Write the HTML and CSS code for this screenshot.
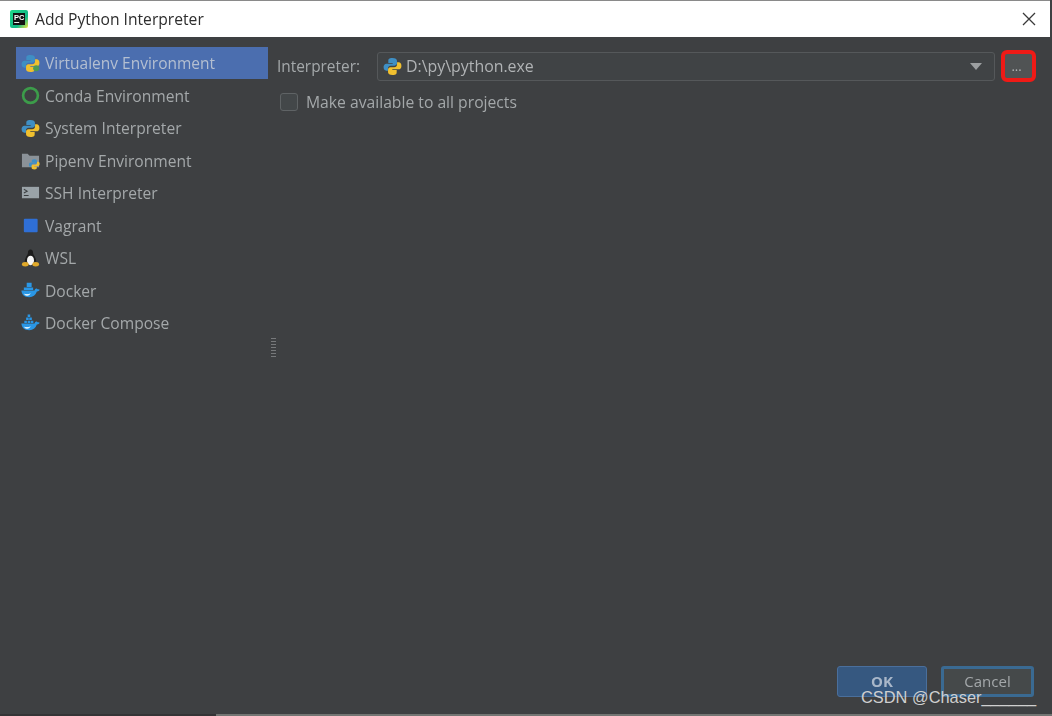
FILE: index.html
```html
<!DOCTYPE html>
<html lang="en">
<head>
<meta charset="utf-8">
<title>Add Python Interpreter</title>
<link rel="stylesheet" href="styles.css">
</head>
<body>
<svg class="defs" width="0" height="0" aria-hidden="true">
  <defs>
    <g id="py">
      <path fill="#3f8fc4" d="M9.900 1C6 1 5.600 2.600 5.600 4v2.200h4.600V7H3.600C1.900 7 .6 8.300.6 10.600c0 2.400 1.200 3.800 2.900 3.800h1.700v-2.300c0-1.600 1.300-3 3-3h4.100c1.300 0 2.400-1.100 2.400-2.400V4c0-1.600-1.500-3-4.800-3z"/>
      <path fill="#f0c02f" d="M10.100 19c3.900 0 4.300-1.600 4.300-3v-2.200H9.800V13h6.600c1.700 0 3-1.300 3-3.600 0-2.400-1.200-3.800-2.900-3.800h-1.700v2.300c0 1.600-1.300 3-3 3H7.700c-1.300 0-2.400 1.100-2.400 2.400V16c0 1.600 1.500 3 4.800 3z"/>
    </g>
    <g id="whale">
      <path fill="#2a97e6" d="M.4 10h13.900c.2-1.500 1.300-2.400 2.300-2l.9.800c.8-.3 1.600-.2 2.200.4-.6 1.300-1.700 1.900-3 1.800-1.400 3.800-4.100 6-7.900 6C3.600 17 .8 14.500.4 10z"/>
      <path fill="#d9f0fc" d="M3.200 13.400c2.600.6 5 .4 7-.6-1 2-3 2.900-4.600 2.700-1-.2-1.900-1-2.400-2.100z"/>
    </g>
  </defs>
</svg>
<div class="dialog">
  <header class="titlebar">
    <svg class="app-logo" viewBox="0 0 18 18" width="18" height="18">
      <defs>
        <linearGradient id="pcg" x1="0" y1="0" x2="1" y2="1">
          <stop offset="0" stop-color="#21d789"/>
          <stop offset="0.65" stop-color="#12b886"/>
          <stop offset="1" stop-color="#f5e642"/>
        </linearGradient>
      </defs>
      <rect width="18" height="18" rx="2" fill="url(#pcg)"/>
      <rect x="3" y="3" width="12" height="12" fill="#111"/>
      <text x="4" y="9.500" class="app-logo-text">PC</text>
      <rect x="4.200" y="12" width="5" height="1" fill="#eee"/>
    </svg>
    <h1 class="title">Add Python Interpreter</h1>
    <svg class="close" viewBox="0 0 14 14" width="14" height="14"><path d="M1 1l12 12M13 1L1 13" stroke="#3a3a3a" stroke-width="1.300" fill="none"/></svg>
  </header>

  <main class="content">
    <nav class="sidebar">
      <div class="item selected">
        <svg class="ico" viewBox="0 0 20 20"><use href="#py"/><circle cx="16" cy="15" r="3.200" fill="#4c9a55"/></svg>
        <span>Virtualenv Environment</span>
      </div>
      <div class="item">
        <svg class="ico" viewBox="0 0 20 20"><circle cx="10" cy="10" r="7.800" fill="none" stroke="#3c9c4a" stroke-width="2.800"/></svg>
        <span>Conda Environment</span>
      </div>
      <div class="item">
        <svg class="ico" viewBox="0 0 20 20"><use href="#py"/></svg>
        <span>System Interpreter</span>
      </div>
      <div class="item">
        <svg class="ico" viewBox="0 0 20 20"><path fill="#8b9298" d="M1 3h6l2 2h10v12H1z"/><g transform="translate(8 8) scale(.6)"><use href="#py"/></g></svg>
        <span>Pipenv Environment</span>
      </div>
      <div class="item">
        <svg class="ico" viewBox="0 0 20 20"><rect x="1" y="3" width="18" height="12" fill="#9aa3a8"/><path d="M3 5.500l3.500 2L3 9.500M3 12h5" stroke="#3c3f41" stroke-width="1.100" fill="none"/></svg>
        <span>SSH Interpreter</span>
      </div>
      <div class="item">
        <svg class="ico" viewBox="0 0 20 20"><rect x="3" y="3" width="14.500" height="14" rx="1" fill="#2f6fd6"/></svg>
        <span>Vagrant</span>
      </div>
      <div class="item">
        <svg class="ico" viewBox="0 0 20 20"><path fill="#1c1c1c" d="M10 .5c2 0 2.700 1.500 2.700 3.500 0 2.500 3.300 4.500 3.300 9.500H4c0-5 3.300-7 3.300-9.500C7.300 2 8 .5 10 .5z"/><ellipse cx="10" cy="12" rx="3.700" ry="5" fill="#f5f5f5"/><ellipse cx="4.500" cy="16" rx="3.500" ry="2.300" fill="#e0a92a"/><ellipse cx="15.500" cy="16" rx="3.500" ry="2.300" fill="#e0a92a"/></svg>
        <span>WSL</span>
      </div>
      <div class="item">
        <svg class="ico" viewBox="0 0 20 20"><use href="#whale"/><path fill="#2a97e6" d="M3 6.800h9.800v2.800H3zM6 1.800h5.200v4.500H6z"/></svg>
        <span>Docker</span>
      </div>
      <div class="item">
        <svg class="ico" viewBox="0 0 20 20"><use href="#whale"/><path fill="#2a97e6" d="M3.500 7h2.700v2.600H3.500zM7 7h2.700v2.600H7zM10.300 7h2.700v2.600h-2.700zM5.400 3.800h2.700v2.600H5.400zM8.700 3.800h2.700v2.600H8.700zM7 .5h2.700v2.700H7z"/></svg>
        <span>Docker Compose</span>
      </div>
    </nav>

    <div class="grip" aria-hidden="true"></div>

    <section class="panel">
      <div class="field-row">
        <label class="field-label">Interpreter:</label>
        <div class="combo">
          <svg class="ico combo-ico" viewBox="0 0 20 20"><use href="#py"/></svg>
          <span class="combo-text">D:\py\python.exe</span>
          <span class="arrow"></span>
        </div>
        <button class="browse" type="button">...</button>
      </div>
      <label class="check-row">
        <span class="checkbox"></span>
        <span>Make available to all projects</span>
      </label>
    </section>
  </main>

  <footer class="footer">
    <button class="btn primary" type="button">OK</button>
    <button class="btn cancel" type="button">Cancel</button>
  </footer>
  <div class="edge"></div>
</div>
<div class="watermark">CSDN @Chaser______</div>
</body>
</html>
```

FILE: styles.css
```css
* { box-sizing: border-box; }
html, body { margin: 0; height: 100%; overflow: hidden; }
body { background: #3e4042; font-family: "Open Sans", "Noto Sans", sans-serif; color: #a9adaf; }
.defs { position: absolute; }
.dialog { height: 716px; display: flex; flex-direction: column; background: #3e4042; filter: blur(.45px); }

.titlebar { height: 37px; flex: none; display: flex; align-items: center; background: #fff; border-top: 1px solid #8a8a8a; margin-right: 2px; padding: 0 14px 0 10px; }
.app-logo { flex: none; }
.app-logo-text { font-family: "Liberation Sans", sans-serif; font-size: 7.500px; font-weight: 700; fill: #fff; }
.title { margin: 0 0 0 7px; flex: 1; font-size: 15.650px; font-weight: 400; color: #2d2d2d; font-family: "Open Sans", sans-serif; }
.close { flex: none; }

.content { flex: 1; display: flex; min-height: 0; padding: 10px 0 0 16px; }
.sidebar { width: 252px; flex: none; }
.item { height: 32.500px; display: flex; align-items: center; gap: 5px; padding-left: 5px; font-size: 15.600px; color: #a4a8aa; white-space: nowrap; }
.item.selected { height: 32px; margin-bottom: .500px; background: #4b6eaf; color: #b4bfd1; }
.item.selected span { font-size: 15.500px; }
.ico { width: 19px; height: 19px; flex: none; }

.grip { width: 5px; height: 19px; margin: 291px 0 0 3px; flex: none; background: repeating-linear-gradient(to bottom, #77797b 0 1px, transparent 1px 3px); }

.panel { flex: 1; padding: 3px 17px 0 1px; min-width: 0; }
.field-row { display: flex; align-items: center; height: 32px; }
.field-label { width: 100px; flex: none; font-size: 15.400px; color: #a4a8aa; }
.combo { width: 618px; height: 29px; flex: none; display: flex; align-items: center; border: 1px solid #55585a; border-radius: 3px; background: #404345; padding: 0 12px 0 5px; font-size: 15.900px; color: #b0b3b5; }
.combo-ico { margin-right: 4px; }
.combo-text { flex: 1; }
.arrow { width: 0; height: 0; border-left: 6px solid transparent; border-right: 6px solid transparent; border-top: 7px solid #9c9fa1; }
.browse { width: 35px; height: 32px; margin-left: 6px; flex: none; border: 4px solid #ef1a16; border-radius: 6px; background: #505354; color: #b0b3b5; font-family: "Open Sans", sans-serif; font-size: 13px; padding: 0 4px 0 0; }
.check-row { display: flex; align-items: center; gap: 8px; margin: 8px 0 0 3px; height: 24px; font-size: 15.700px; color: #a4a8aa; }
.checkbox { width: 18px; height: 18px; flex: none; border: 1px solid #5f6365; border-radius: 3px; background: #434749; }

.footer { flex: none; display: flex; justify-content: flex-end; gap: 14px; padding: 0 18px 17px 0; }
.btn { width: 90px; height: 31px; font-family: "Open Sans", sans-serif; font-size: 15px; border-radius: 3px; padding: 0 0 1px; }
.primary { background: #365880; border: 1px solid #4a6f9c; color: #a9b7c9; font-weight: 700; }
.cancel { width: 93px; background: #45494a; border: 3px solid #3a6a92; color: #a4a8aa; }
.edge { height: 2px; flex: none; background: linear-gradient(to right, #343436 0 216px, #737573 216px); }

.watermark { position: absolute; left: 861px; top: 687px; font-family: "Liberation Sans", sans-serif; font-size: 16.400px; line-height: 20px; color: #cfcfcf; white-space: nowrap; }
```
